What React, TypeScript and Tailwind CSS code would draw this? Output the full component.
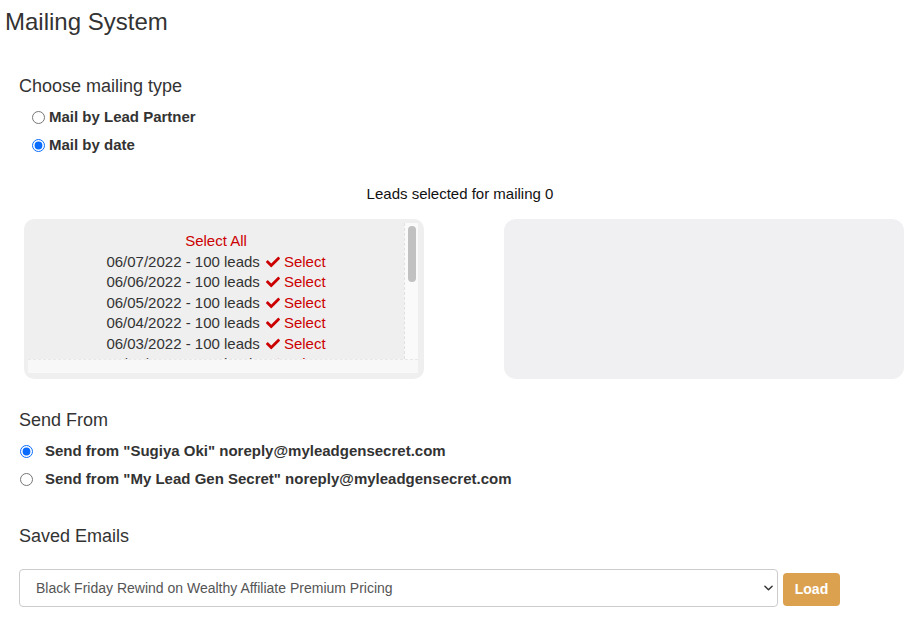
import React from 'react';

const DATES = ['06/07/2022', '06/06/2022', '06/05/2022', '06/04/2022', '06/03/2022', '06/02/2022'];

function Check() {
  return (
    <svg viewBox="0 0 512 512" className="w-[16px] h-[14px] fill-[#cc0000] shrink-0" aria-hidden>
      <path d="M173.898 439.404l-166.4-166.4c-9.997-9.997-9.997-26.206 0-36.204l36.203-36.204c9.997-9.998 26.207-9.998 36.204 0L192 312.69 432.095 72.596c9.997-9.997 26.207-9.997 36.204 0l36.203 36.204c9.997 9.997 9.997 26.206 0 36.204l-294.4 294.401c-9.998 9.997-26.207 9.997-36.204-.001z" />
    </svg>
  );
}

function Radio({ checked, name }: { checked?: boolean; name: string }) {
  return (
    <input
      type="radio"
      name={name}
      defaultChecked={checked}
      className="m-0 w-[13px] h-[13px] accent-[#0a6cff] shrink-0"
    />
  );
}

export default function App() {
  return (
    <div className="w-[920px] h-[620px] bg-white text-[#333] font-['Liberation_Sans',Arial,sans-serif] overflow-hidden">
      {/* Title */}
      <h1 className="pt-[9px] pl-[5px] text-[24px] leading-[26px] font-normal">Mailing System</h1>

      {/* Mailing type */}
      <div className="pl-[19px] mt-[41px] text-[18px] leading-[20px]">Choose mailing type</div>
      <div className="mt-[11px] pl-[32px] flex flex-col gap-[8px] text-[15px] leading-[20px] font-bold">
        <label className="flex items-center gap-[4px]">
          <Radio name="type" />
          Mail by Lead Partner
        </label>
        <label className="flex items-center gap-[4px]">
          <Radio name="type" checked />
          Mail by date
        </label>
      </div>

      <div className="mt-[29px] text-center text-[15px] leading-[20px] text-[#111]">Leads selected for mailing 0</div>

      {/* Lead boxes */}
      <div className="mt-[15px] pl-[24px] flex gap-[80px]">
        <div className="w-[400px] h-[160px] rounded-[10px] bg-[#efefef] pt-[4px] pl-[4px] pr-[6px] pb-[6px]">
          <div className="flex flex-col h-full">
            <div className="flex h-[136px]">
              <div className="flex-1 overflow-hidden pt-[8px] text-center text-[15px] leading-[20.5px]">
                <div className="text-[#cc0000]">Select All</div>
                {DATES.map((d) => (
                  <div key={d} className="flex items-center justify-center">
                    <span>{d} - 100 leads</span>
                    <span className="ml-[5px] mr-[3px]">
                      <Check />
                    </span>
                    <span className="text-[#cc0000]">Select</span>
                  </div>
                ))}
              </div>
              <div className="w-[14px] bg-[#fafafa] border-l border-dashed border-[#e0e0e0] pt-[3px] flex justify-center">
                <div className="w-[8px] h-[56px] rounded-full bg-[#c1c1c1]" />
              </div>
            </div>
            <div className="flex-1 bg-[#f8f8f9] border-t border-dashed border-[#e8e8e8]" />
          </div>
        </div>
        <div className="w-[400px] h-[160px] rounded-[12px] bg-[#f0f0f2]" />
      </div>

      {/* Send from */}
      <div className="pl-[19px] mt-[31px] text-[18px] leading-[20px]">Send From</div>
      <div className="mt-[11px] pl-[20px] flex flex-col gap-[8px] text-[15px] leading-[20px] font-bold">
        <label className="flex items-center gap-[12px]">
          <Radio name="from" checked />
          Send from "Sugiya Oki" noreply@myleadgensecret.com
        </label>
        <label className="flex items-center gap-[12px]">
          <Radio name="from" />
          Send from "My Lead Gen Secret" noreply@myleadgensecret.com
        </label>
      </div>

      {/* Saved emails */}
      <div className="pl-[19px] mt-[37px] text-[18px] leading-[20px]">Saved Emails</div>
      <div className="mt-[23px] pl-[19px] flex items-start gap-[5px]">
        <div className="w-[759px] h-[38px] border border-[#cccccc] rounded-[4px] bg-white flex items-center justify-between pl-[16px] pr-[4px] text-[14px] text-[#555]">
          <span>Black Friday Rewind on Wealthy Affiliate Premium Pricing</span>
          <svg viewBox="0 0 10 6" className="w-[9px] h-[6px]" aria-hidden>
            <path d="M1 1l4 4 4-4" fill="none" stroke="#333" strokeWidth="1.6" strokeLinecap="round" strokeLinejoin="round" />
          </svg>
        </div>
        <button className="mt-[4px] w-[57px] h-[33px] rounded-[4px] bg-[#dba14f] text-white text-[14px] font-bold">
          Load
        </button>
      </div>
    </div>
  );
}
